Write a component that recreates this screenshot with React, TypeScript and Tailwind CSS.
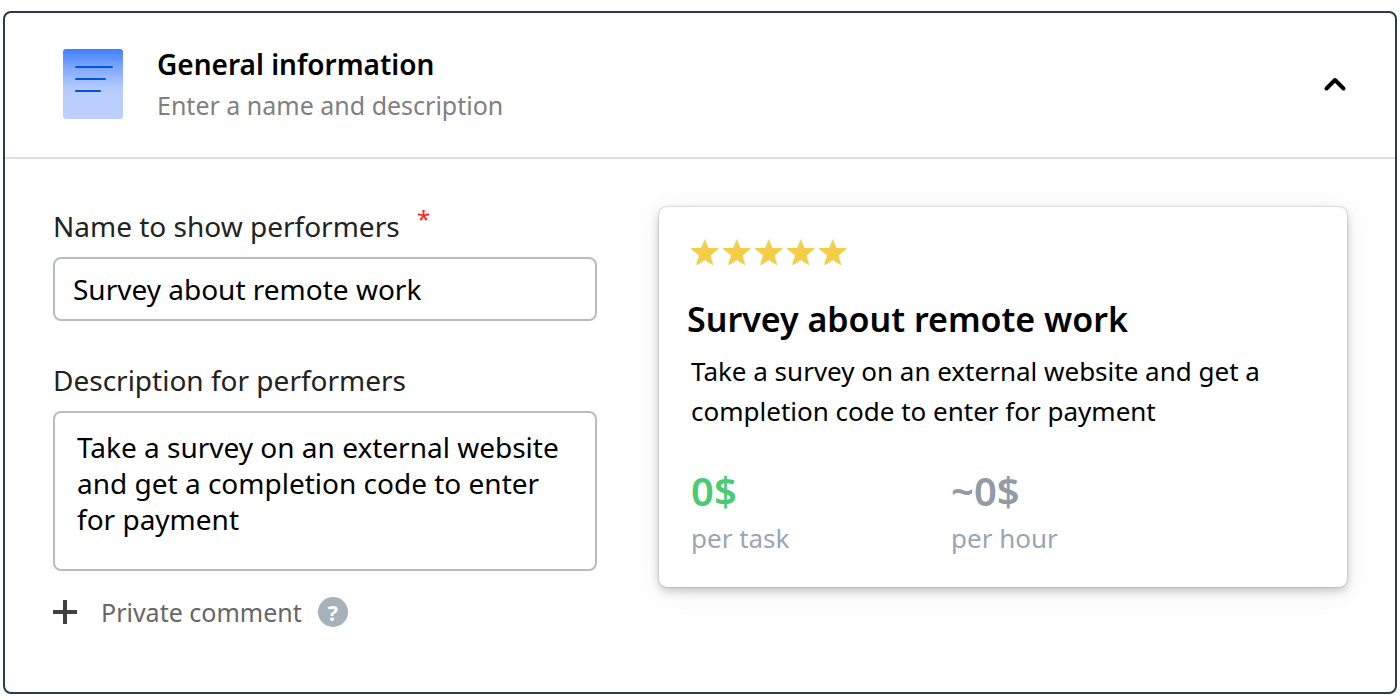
import { useState } from "react";

function DocumentIcon() {
  return (
    <svg width="60" height="70" viewBox="0 0 60 70" aria-hidden="true" className="shrink-0">
      <defs>
        <linearGradient id="sheet" x1="0" y1="0" x2="0" y2="1">
          <stop offset="0" stopColor="#3f80ff" />
          <stop offset="0.25" stopColor="#7ba5ff" />
          <stop offset="0.55" stopColor="#b3caff" />
          <stop offset="0.7" stopColor="#bbd0ff" />
          <stop offset="1" stopColor="#bbd0ff" />
        </linearGradient>
      </defs>
      <rect width="60" height="70" rx="3" fill="url(#sheet)" />
      <path d="M13 18h36M13 30h29M13 42h24" stroke="#0055dc" strokeWidth="2" strokeLinecap="round" />
    </svg>
  );
}

function Star() {
  return (
    <svg width="28" height="26" viewBox="0 0 28 26" aria-hidden="true">
      <path
        d="M13.8 0l3.7 9H27.5v1L19.6 16.5 22.4 26h-1L13.8 21 6.2 26h-1L8 16.5 0 10V9h10.1z"
        fill="#f5ce47"
      />
    </svg>
  );
}

function Rate({ amount, unit, tone }: { amount: string; unit: string; tone: string }) {
  return (
    <div>
      <div className={`text-[40px] leading-[48px] font-semibold ${tone}`}>{amount}</div>
      <div className="mt-[3px] text-[26px] leading-10 text-[#99a6b3]">{unit}</div>
    </div>
  );
}

export default function App() {
  const [open, setOpen] = useState(true);
  const [name, setName] = useState("Survey about remote work");
  const [description, setDescription] = useState(
    "Take a survey on an external website and get a completion code to enter for payment",
  );

  return (
    <main className="px-[3px] pt-[11px] pb-1.5 font-['Noto_Sans',sans-serif] text-black">
      <section className="rounded-lg border-2 border-[#2b3b4e] bg-white">
        <header className="flex items-center justify-between border-b-2 border-[#dfdfdf] pt-[34px] pb-9 pr-12 pl-[58px]">
          <div className="flex items-center gap-[34px]">
            <DocumentIcon />
            <div>
              <h2 className="text-[28px] leading-[34px] font-semibold">General information</h2>
              <p className="mt-2 text-[25px] leading-[32px] text-[#808080]">Enter a name and description</p>
            </div>
          </div>
          <button type="button" aria-label="Toggle section" aria-expanded={open} onClick={() => setOpen(!open)}>
            <svg width="24" height="24" viewBox="0 0 24 24" fill="none" className={open ? "" : "rotate-180"}>
              <path d="M3.5 16.5L12 8l8.5 8.5" stroke="#000" strokeWidth="4" strokeLinecap="round" strokeLinejoin="round" />
            </svg>
          </button>
        </header>

        {open && (
          <div className="grid grid-cols-[544fr_688fr] items-start gap-[62px] px-12 pt-12 pb-15">
            <form>
              <label htmlFor="name" className="block text-[28px] leading-[38px] text-[#222]">
                Name to show performers <span className="ml-2.5 align-top text-[24px] leading-6 text-[#ff1f1f]">*</span>
              </label>
              <input
                id="name"
                value={name}
                onChange={(e) => setName(e.target.value)}
                className="mt-3 block h-16 w-full rounded-lg border-2 border-[#b8bcc2] px-[18px] text-[28px]"
              />
              <label htmlFor="description" className="mt-10 block text-[28px] leading-[38px] text-[#222]">
                Description for performers
              </label>
              <textarea
                id="description"
                value={description}
                onChange={(e) => setDescription(e.target.value)}
                className="mt-3 block h-40 w-full resize-none overflow-hidden rounded-lg border-2 border-[#b8bcc2] px-[22px] py-4 text-[28px] leading-9"
              />
              <div className="mt-[21px] flex items-center gap-4">
                <button type="button" className="flex items-center gap-6 text-[25px] leading-10 text-[#666]">
                  <svg width="24" height="24" viewBox="0 0 24 24" aria-hidden="true">
                    <path d="M12 0v24M0 12h24" stroke="#404040" strokeWidth="4" />
                  </svg>
                  Private comment
                </button>
                <button
                  type="button"
                  aria-label="About private comments"
                  className="flex size-[30px] items-center justify-center rounded-full bg-[#a6b1bb] text-[22px] leading-none font-bold text-white"
                >
                  ?
                </button>
              </div>
            </form>

            <article className="rounded-lg bg-white px-8 pt-8 pb-[29px] shadow-[0_0_2px_rgba(0,0,0,0.3),0_4px_10px_rgba(0,0,0,0.2),0_4px_32px_rgba(0,0,0,0.07)]">
              <div role="img" aria-label="5 out of 5 stars" className="flex gap-1">
                <Star />
                <Star />
                <Star />
                <Star />
                <Star />
              </div>
              <h3 className="mt-8 -ml-1 text-[34px] leading-[44px] font-semibold">{name}</h3>
              <p className="mt-2.5 text-[26px] leading-10">{description}</p>
              <div className="mt-9 grid max-w-[520px] grid-cols-2">
                <Rate amount="0$" unit="per task" tone="text-[#47cb73]" />
                <Rate amount="~0$" unit="per hour" tone="text-[#929ba5]" />
              </div>
            </article>
          </div>
        )}
      </section>
    </main>
  );
}
